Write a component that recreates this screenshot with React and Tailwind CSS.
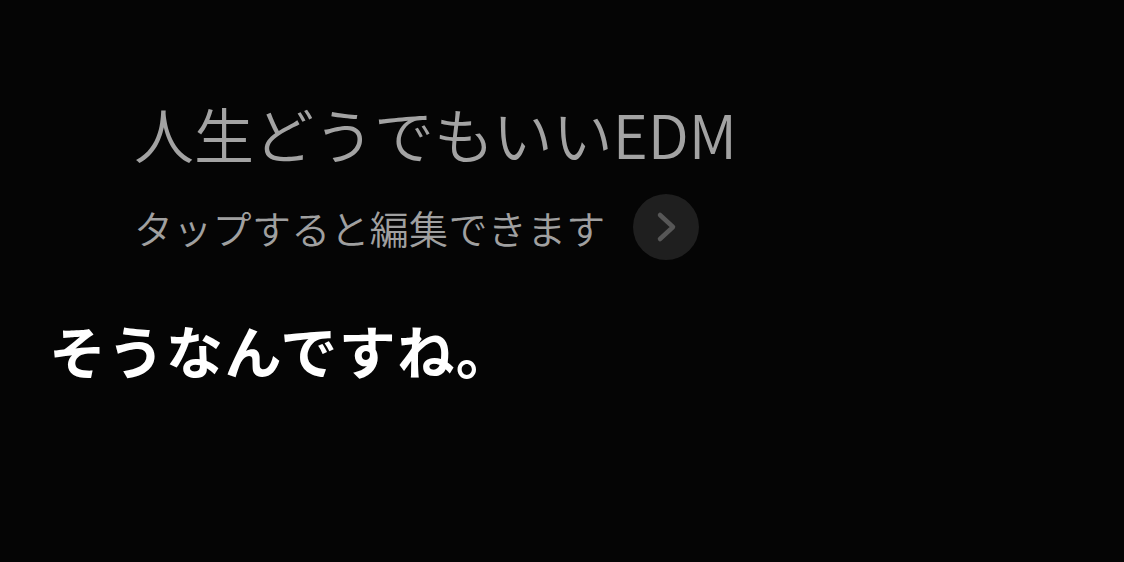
export default function App() {
  return (
    <div
      className="w-[1124px] h-[562px] bg-[#050505] overflow-hidden"
      style={{ fontFamily: '"Noto Sans CJK JP", "Noto Sans", sans-serif' }}
    >
      <div className="pl-[134px] pt-[97px]">
        <h1 className="text-[60px] leading-[72px] font-[350] text-[#a3a3a3] whitespace-nowrap">
          人生どうでもいいEDM
        </h1>
        <button className="mt-[25px] flex items-center gap-[27px]">
          <span className="text-[39px] leading-[62px] font-[350] text-[#a0a0a0] whitespace-nowrap tracking-[0.3px]">
            タップすると編集できます
          </span>
          <span className="w-[66px] h-[66px] rounded-full bg-[#1f1f1f] flex items-center justify-center">
            <svg width="24" height="32" viewBox="0 0 24 32" fill="none" className="ml-[2px]">
              <path d="M5 4 L18 16 L5 28" stroke="#575757" strokeWidth="4.5" strokeLinecap="round" strokeLinejoin="round" />
            </svg>
          </span>
        </button>
      </div>
      <p className="pl-[49px] mt-[53px] text-[57px] leading-[72px] font-bold text-white whitespace-nowrap tracking-[1.5px]">
        そうなんですね。
      </p>
    </div>
  );
}
